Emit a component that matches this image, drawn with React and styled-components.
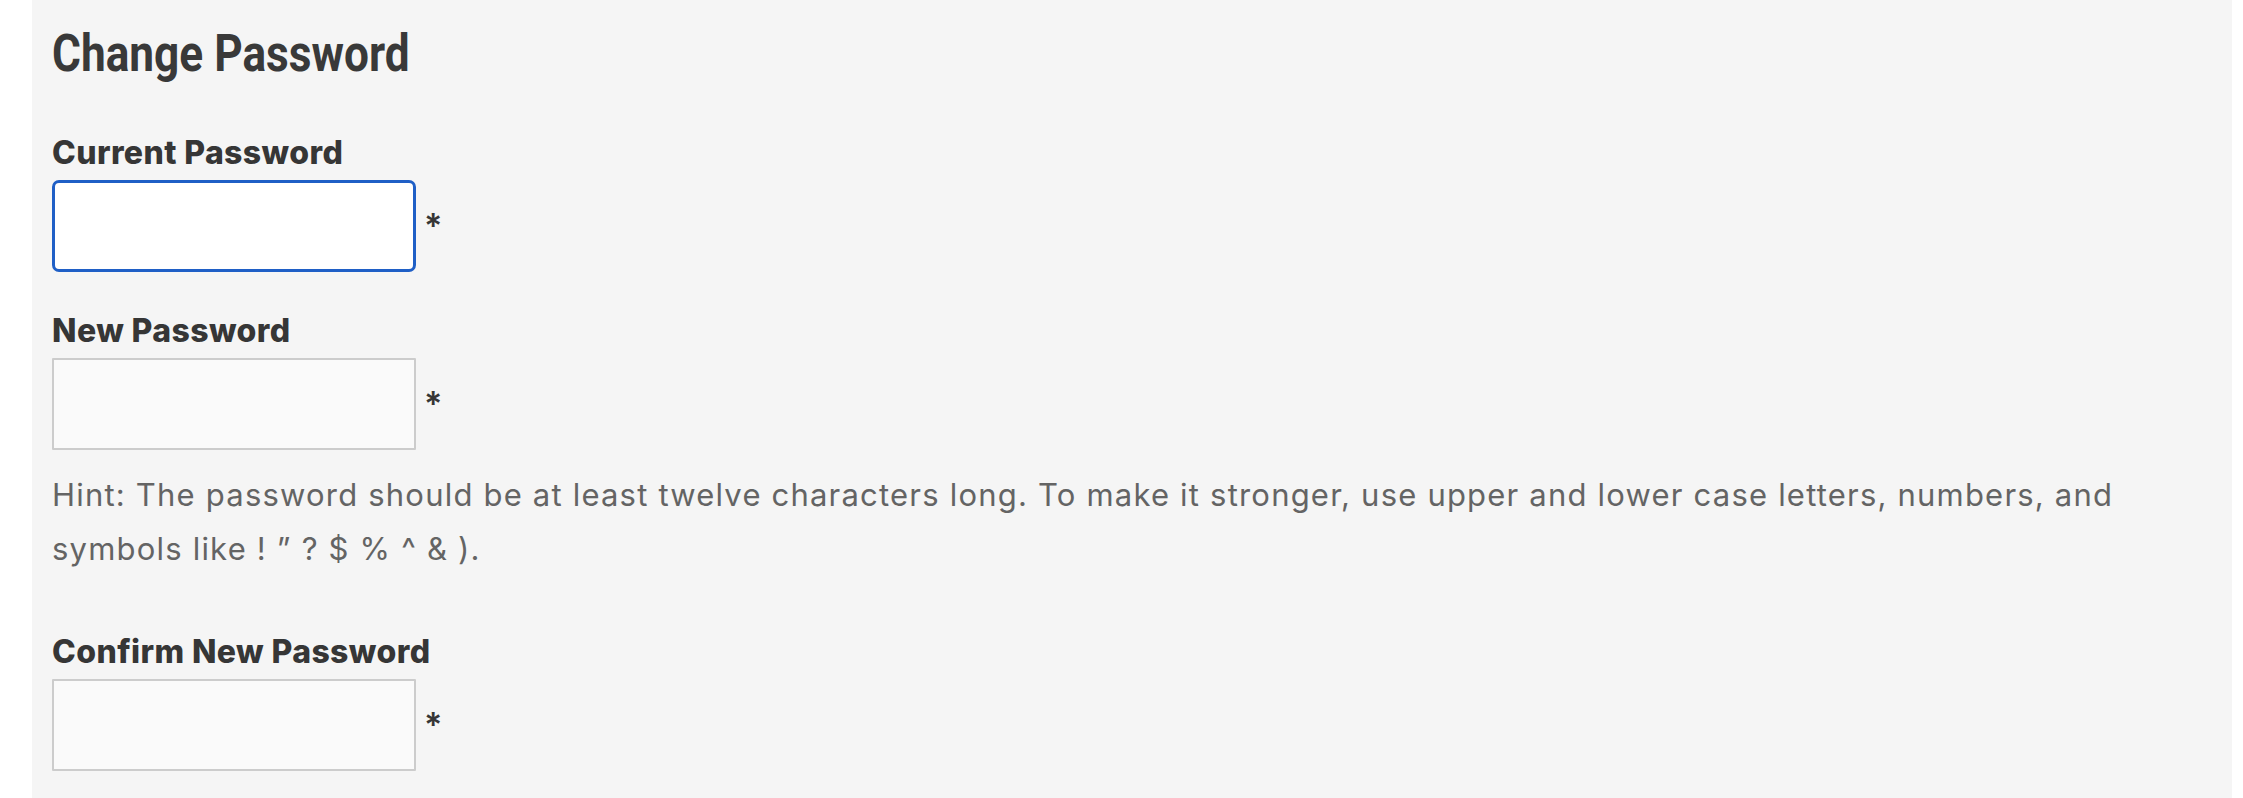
import React from 'react';
import styled, { createGlobalStyle } from 'styled-components';

const GlobalStyle = createGlobalStyle`
  body {
    margin: 0;
    background: #ffffff;
  }
`;

const Page = styled.div`
  padding: 0 11px 0 32px;
`;

const Panel = styled.form`
  background: #f5f5f5;
  padding: 24px 20px 40px;
  min-height: 798px;
  box-sizing: border-box;
`;

const Title = styled.h2`
  margin: 0;
  width: fit-content;
  font-family: Roboto, "Liberation Sans", sans-serif;
  font-weight: 700;
  font-size: 52px;
  line-height: 60px;
  color: #393939;
  transform: scaleX(0.85);
  transform-origin: left center;
`;

const Field = styled.div`
  margin-top: ${(p) => p.$gap}px;
`;

const Label = styled.label`
  display: block;
  margin-bottom: 7px;
  font-family: Inter, "Open Sans", sans-serif;
  font-weight: 800;
  font-size: 32px;
  line-height: 40px;
  letter-spacing: 0.4px;
  color: #363636;
`;

const InputRow = styled.div`
  display: flex;
  align-items: center;
`;

const Input = styled.input`
  box-sizing: border-box;
  width: 364px;
  height: 92px;
  margin: 0;
  padding: 0 12px;
  font-size: 28px;
  background: ${(p) => (p.$focused ? '#ffffff' : '#fafafa')};
  border: ${(p) => (p.$focused ? '3px solid #1f5fc6' : '2px solid #cccccc')};
  border-radius: ${(p) => (p.$focused ? '7px' : '1px')};
  outline: none;
`;

const Required = styled.span`
  margin-left: 8px;
  font-family: Inter, "Open Sans", sans-serif;
  font-weight: 600;
  font-size: 34px;
  line-height: 32px;
  color: #363636;
`;

const Hint = styled.p`
  margin: 18px 0 0;
  font-family: Inter, "Open Sans", sans-serif;
  font-weight: 400;
  font-size: 31px;
  line-height: 54px;
  letter-spacing: 1.2px;
  color: #646464;
`;

const PasswordField = ({ label, id, gap, focused }) => (
  <Field $gap={gap}>
    <Label htmlFor={id}>{label}</Label>
    <InputRow>
      <Input id={id} type="password" $focused={focused} />
      <Required>*</Required>
    </InputRow>
  </Field>
);

export default function App() {
  return (
    <Page>
      <GlobalStyle />
      <Panel>
        <Title>Change Password</Title>
        <PasswordField label="Current Password" id="current" gap={49} focused />
        <PasswordField label="New Password" id="new" gap={39} />
        <Hint>
          Hint: The password should be at least twelve characters long. To make it stronger, use upper and lower case
          letters, numbers, and symbols like ! ” ? $ % ^ &amp; ).
        </Hint>
        <PasswordField label="Confirm New Password" id="confirm" gap={56} />
      </Panel>
    </Page>
  );
}
